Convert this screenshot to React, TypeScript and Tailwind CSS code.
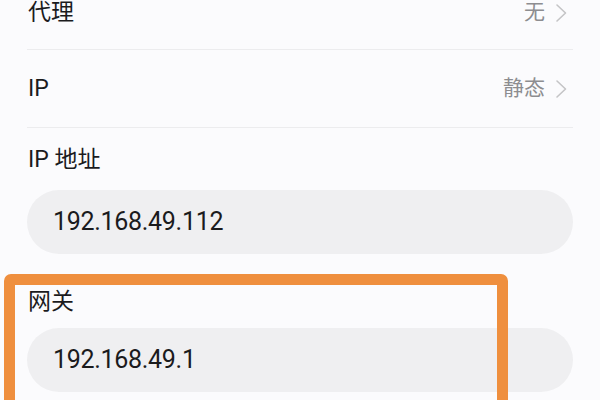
import React from 'react';

const FONT = { fontFamily: 'Roboto, "Noto Sans CJK SC", sans-serif' };

function Chevron() {
  return (
    <svg className="w-[13px] h-[20px] text-[#c4c4c6]" viewBox="0 0 13 20" fill="none" stroke="currentColor" strokeWidth="1.6" strokeLinecap="round" strokeLinejoin="round">
      <path d="M2 2l8.5 8-8.5 8" />
    </svg>
  );
}

function NavRow({ label, value, first }: { label: string; value: string; first?: boolean }) {
  return (
    <div className={`flex items-center justify-between border-b border-[#ececee] pl-[1px] pr-[5px] ${first ? '-mt-[24px] h-[74px]' : 'h-[78px]'}`}>
      <span className="text-[23px] leading-[28px] text-[#1b1b1d]">{label}</span>
      <div className="flex items-center gap-[10px]">
        <span className="text-[21px] text-[#8d8d90]">{value}</span>
        <Chevron />
      </div>
    </div>
  );
}

function Field({ label, value, labelTop, gap }: { label: string; value: string; labelTop: string; gap: string }) {
  return (
    <div className={labelTop}>
      <div className="text-[23px] leading-[28px] text-[#1b1b1d] pl-[1px]">{label}</div>
      <div className={`${gap} h-[64px] rounded-full bg-[#efeff1] flex items-center pl-[26px]`}>
        <span className="text-[25px] text-[#1b1b1d] tracking-[-0.3px]">{value}</span>
      </div>
    </div>
  );
}

export default function App() {
  return (
    <div className="relative w-[600px] h-[400px] overflow-hidden bg-[#fbfbfd]" style={FONT}>
      <div className="px-[27px]">
        <NavRow label="代理" value="无" first />
        <NavRow label="IP" value="静态" />
        <Field label="IP 地址" value="192.168.49.112" labelTop="pt-[18px]" gap="mt-[16px]" />
        <Field label="网关" value="192.168.49.1" labelTop="pt-[34px]" gap="mt-[12px]" />
      </div>
      <div className="absolute left-[4px] top-[274px] w-[504px] h-[200px] border-[11px] border-[#ef8f3e] rounded-[7px]" />
    </div>
  );
}
